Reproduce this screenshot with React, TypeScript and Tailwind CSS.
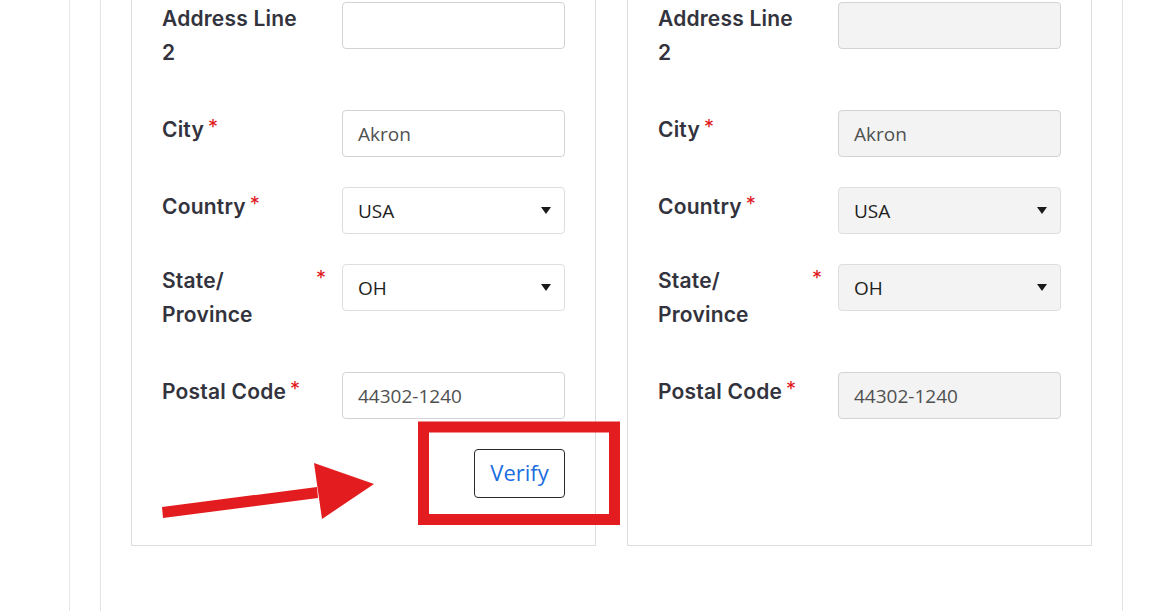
import React from "react";

const labelFont = { fontFamily: "Inter, 'Noto Sans', sans-serif" };
const inputFont = { fontFamily: "'Open Sans', 'Noto Sans', sans-serif" };

function Label({ lines, required, spread }: { lines: string[]; required?: boolean; spread?: boolean }) {
  const single = lines.length === 1;
  return (
    <div className={`w-[168px] shrink-0 flex items-start pb-[10px] ${single ? "pt-[3px]" : "pt-[0px]"}`} style={labelFont}>
      <span className={`${spread ? "flex-1" : ""} text-[21px] leading-[34px] font-semibold text-[#33333d] tracking-[0.2px]`}>
        {lines.map((l, i) => (
          <React.Fragment key={i}>
            {i > 0 && <br />}
            {l}
          </React.Fragment>
        ))}
      </span>
      {required && (
        <span className={`text-[#e0161b] text-[20px] leading-[20px] mt-[4px] ${spread ? "mr-[4px]" : "ml-[4px]"}`}>*</span>
      )}
    </div>
  );
}

function TextBox({ value, disabled }: { value?: string; disabled?: boolean }) {
  return (
    <div
      className={`w-[223px] h-[47px] ml-[12px] rounded-[4px] border border-[#d3d3d3] flex items-center pl-[15px] pt-[1px] ${
        disabled ? "bg-[#f3f3f3]" : "bg-white"
      }`}
      style={inputFont}
    >
      <span className="text-[19px] text-[#505050]">{value ?? ""}</span>
    </div>
  );
}

function SelectBox({ value, disabled }: { value: string; disabled?: boolean }) {
  return (
    <div
      className={`w-[223px] h-[47px] ml-[12px] rounded-[4px] border border-[#dedede] flex items-center justify-between pl-[15px] pr-[13px] ${
        disabled ? "bg-[#f3f3f3]" : "bg-white"
      }`}
      style={inputFont}
    >
      <span className="text-[19px] text-[#1e1e1e] pt-[1px]">{value}</span>
      <svg width="10" height="7" viewBox="0 0 10 7">
        <polygon points="0,0 10,0 5,7" fill="#1a1a1a" />
      </svg>
    </div>
  );
}

function Card({ disabled, verify }: { disabled?: boolean; verify?: boolean }) {
  return (
    <div className="w-[465px] border-x border-b border-[#dcdcdc] px-[30px] pt-[2px] pb-[47px] bg-white">
      <div className="flex items-start mb-[30px]">
        <Label lines={["Address Line", "2"]} />
        <TextBox disabled={disabled} />
      </div>
      <div className="flex items-start mb-[30px]">
        <Label lines={["City"]} required />
        <TextBox value="Akron" disabled={disabled} />
      </div>
      <div className="flex items-start mb-[30px]">
        <Label lines={["Country"]} required />
        <SelectBox value="USA" disabled={disabled} />
      </div>
      <div className="flex items-start mb-[30px]">
        <Label lines={["State/", "Province"]} required spread />
        <SelectBox value="OH" disabled={disabled} />
      </div>
      <div className="flex items-start">
        <Label lines={["Postal Code"]} required />
        <TextBox value="44302-1240" disabled={disabled} />
      </div>
      {verify && (
        <div className="flex justify-end mt-[30px]">
          <button
            className="w-[91px] h-[49px] rounded-[4px] border border-[#2a2a2a] bg-white text-[#1a6ee0] text-[22px] leading-none pb-[3px]"
            style={inputFont}
          >
            Verify
          </button>
        </div>
      )}
    </div>
  );
}

export default function App() {
  return (
    <div className="relative w-[1153px] h-[611px] overflow-hidden bg-white">
      <div className="ml-[69px] h-full border-l border-[#e6e6e6]">
        <div className="ml-[30px] w-[1023px] h-full border-x border-[#e3e3e3] flex items-start gap-[30px] pl-[30px]">
          <div className="flex gap-[31px] items-stretch">
            <Card verify />
            <Card disabled />
          </div>
        </div>
      </div>
      <svg className="absolute left-0 top-0 pointer-events-none" width="1153" height="611">
        <rect x="423.5" y="427" width="191" height="92.5" fill="none" stroke="#e31c1f" strokeWidth="11" />
        <polygon points="162,507 317,487 318,498 163,518" fill="#e31c1f" />
        <polygon points="314,463 374,484 322,519" fill="#e31c1f" />
      </svg>
    </div>
  );
}
